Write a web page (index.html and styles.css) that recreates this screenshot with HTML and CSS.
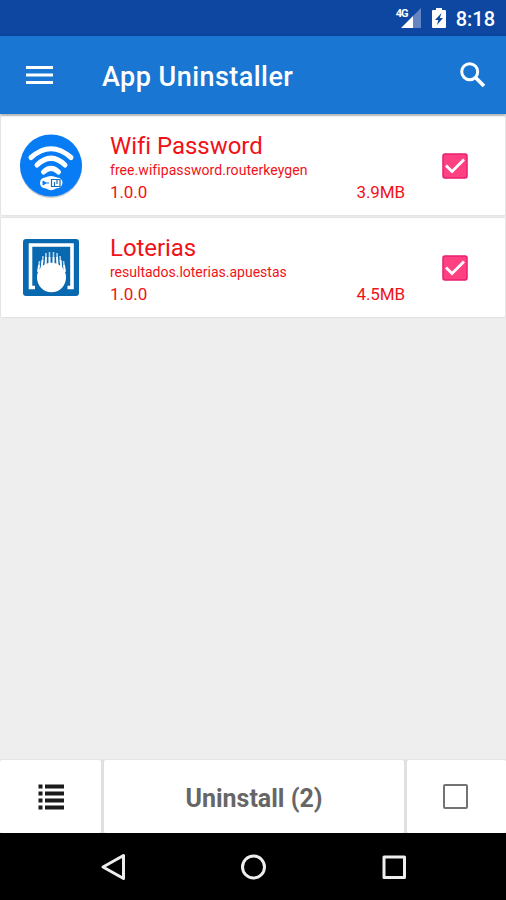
FILE: index.html
```html
<!DOCTYPE html>
<html lang="en">
<head>
    <meta charset="UTF-8">
    <meta name="viewport" content="width=device-width, initial-scale=1.0">
    <title>App Uninstaller</title>
    <link rel="stylesheet" href="styles.css">
</head>
<body>
    <div class="status-bar">
        <span class="network">4G</span>
        <svg class="signal" width="20" height="20" viewBox="0 0 20 20">
            <path d="M20 0V20H12V8Z" fill="#6385c3"/>
            <path d="M12 8V20H0Z" fill="#fff"/>
        </svg>
        <svg class="battery" width="14" height="20" viewBox="0 0 14 20">
            <path d="M1 2H4V0H10V2H13Q14 2 14 3V19Q14 20 13 20H1Q0 20 0 19V3Q0 2 1 2Z" fill="#fff"/>
            <path d="M9.500 5L3 12H6.300L5 17L11 10H7.800Z" fill="#0d47a1"/>
        </svg>
        <span class="clock">8:18</span>
    </div>

    <div class="toolbar">
        <svg class="menu" width="27" height="19" viewBox="0 0 27 19">
            <path d="M0 1.500H27M0 9H27M0 16.500H27" stroke="#fff" stroke-width="3"/>
        </svg>
        <h1>App Uninstaller</h1>
        <svg class="search" width="26" height="26" viewBox="0 0 26 26" fill="none" stroke="#fff">
            <circle cx="9.700" cy="9.700" r="8" stroke-width="3"/>
            <path d="M15.500 15.500L24 24" stroke-width="3.800"/>
        </svg>
    </div>

    <div class="app-list">
        <div class="app">
            <div class="app-icon">
                <svg width="64" height="66" viewBox="0 0 64 66">
                    <circle cx="32" cy="34" r="31" fill="#c9ccd0"/>
                    <circle cx="32" cy="32.500" r="31" fill="#087cf5"/>
                    <g fill="none" stroke="#fff" stroke-width="5" stroke-linecap="round">
                        <path d="M12 24.500Q32 7 52 24.500"/>
                        <path d="M18 32Q32 18.500 46 32"/>
                        <path d="M24.500 39Q32 31.500 39.500 39"/>
                    </g>
                    <path d="M26 44.500Q32 41.500 38 44.500Q43.500 45 43.500 50Q43 55 37 55.500Q32 59 27 55.500Q21 55 21 50Q21 45 26 44.500Z" fill="#fff"/>
                    <path d="M24 48V52L27 50ZM26.500 50H30" fill="#087cf5" stroke="#087cf5"/>
                    <path d="M32.500 46.500H41V53.500H32.500ZM35.500 49V53M38 47V51" fill="none" stroke="#176eb8" stroke-width="1.200"/>
                </svg>
            </div>
            <div class="info">
                <div class="name">Wifi Password</div>
                <div class="package wifi">free.wifipassword.routerkeygen</div>
                <div class="details"><span>1.0.0</span><span>3.9MB</span></div>
            </div>
            <svg class="check" width="26" height="26" viewBox="0 0 26 26">
                <rect x="1" y="1" width="24" height="24" rx="2" fill="#ff4081" stroke="#e91e72" stroke-width="1.500"/>
                <path d="M4 12.500L10 18.500L22 6.500" fill="none" stroke="#fff" stroke-width="2.800"/>
            </svg>
        </div>
        <div class="app">
            <div class="app-icon">
                <svg width="56" height="57" viewBox="0 0 56 57">
                    <rect width="56" height="57" rx="3" fill="#0868b0"/>
                    <path d="M12 48.500H7.500V6H49V48.500H44.500" fill="none" stroke="#fff" stroke-width="3.600"/>
                    <path d="M15.500 32L16.500 22M19 28L20 17M22.500 26L23 14M26.500 25V13M30.500 25V13M34.500 26L34 14M38 28L37 17M41.500 32L40.500 22" stroke="#b4d3e9" stroke-width="1.600"/>
                    <path d="M15 33L16 26M18.500 29L19.500 21M22.500 27L23 18M26.500 26V18M30.500 26V18M34.500 27L34 18M38.500 29L37.500 21M42 33L41 26" stroke="#fff" stroke-width="1.800"/>
                    <ellipse cx="28.500" cy="38.500" rx="14.500" ry="14.800" fill="#fff"/>
                </svg>
            </div>
            <div class="info">
                <div class="name">Loterias</div>
                <div class="package">resultados.loterias.apuestas</div>
                <div class="details"><span>1.0.0</span><span>4.5MB</span></div>
            </div>
            <svg class="check" width="26" height="26" viewBox="0 0 26 26">
                <rect x="1" y="1" width="24" height="24" rx="2" fill="#ff4081" stroke="#e91e72" stroke-width="1.500"/>
                <path d="M4 12.500L10 18.500L22 6.500" fill="none" stroke="#fff" stroke-width="2.800"/>
            </svg>
        </div>
    </div>

    <div class="bottom-bar">
        <div class="action">
            <svg width="26" height="26" viewBox="0 0 26 26" stroke="#1b1b1b" stroke-width="4">
                <path d="M0.500 2.500H4.500M7 2.500H26M0.500 9.500H4.500M7 9.500H26M0.500 16.500H4.500M7 16.500H26M0.500 23.500H4.500M7 23.500H26"/>
            </svg>
        </div>
        <div class="action uninstall">Uninstall (2)</div>
        <div class="action last"><span class="select-all"></span></div>
    </div>

    <div class="nav-bar">
        <svg width="506" height="66" viewBox="0 0 506 66" fill="none" stroke="#eee" stroke-width="3" stroke-linejoin="round">
            <path d="M123.500 21.500V44.500L103 33Z"/>
            <circle cx="253.500" cy="33" r="11"/>
            <rect x="384" y="23" width="20.500" height="20.500"/>
        </svg>
    </div>
</body>
</html>
```
FILE: styles.css
```css
* { box-sizing: border-box; }
body {
    font-family: Roboto, sans-serif;
    margin: 0;
    height: 900px;
    display: flex;
    flex-direction: column;
    background: #eee;
    overflow: hidden;
}
svg { display: block; flex: none; }
.status-bar {
    height: 36px;
    flex: none;
    display: flex;
    justify-content: flex-end;
    padding-right: 11px;
    background: #0d47a1;
    color: white;
}
.network { font-size: 11px; font-weight: 700; line-height: 14px; margin-top: 7px; margin-right: -7px; letter-spacing: -1px; }
.signal { margin-top: 8px; }
.battery { margin: 8px 10px 0 11px; }
.clock { font-size: 20px; font-weight: 500; line-height: 38px; }
.toolbar {
    height: 78px;
    flex: none;
    display: flex;
    align-items: center;
    padding: 0 20px 0 26px;
    background: #1976d2;
    color: white;
    box-shadow: 0 1px 3px rgba(0, 0, 0, 0.35);
    z-index: 1;
}
.toolbar h1 { margin: 3px 0 0 49px; font-size: 27px; font-weight: 500; letter-spacing: 0.45px; flex: 1; white-space: nowrap; }
.app-list { flex: 1; padding: 2px 1px 0; }
.app {
    height: 99px;
    margin-bottom: 3px;
    display: flex;
    background: white;
    border-radius: 1px;
    box-shadow: 0 0 2px rgba(0, 0, 0, 0.15);
}
.app-icon { width: 100px; height: 99px; display: flex; align-items: center; justify-content: center; }
.info { width: 295px; margin-left: 9px; color: #f01218; white-space: nowrap; }
.name { font-size: 24px; letter-spacing: -0.05px; line-height: 28px; padding-top: 16px; }
.package { font-size: 14px; line-height: 18px; margin-top: 1px; }
.wifi { letter-spacing: 0.06px; }
.details { display: flex; justify-content: space-between; font-size: 17px; letter-spacing: -0.1px; line-height: 20px; margin-top: 3px; }
.check { margin: 37px 0 0 37px; }
.bottom-bar { height: 74px; flex: none; display: grid; grid-template-columns: 101px 300px 99px; column-gap: 3px; background: #e0e0e0; border-top: 1px solid #e4e4e4; }
.action { background: white; display: flex; align-items: center; justify-content: center; border-radius: 2px; }
.uninstall { font-size: 25px; font-weight: 700; color: #666; padding-top: 3px; }
.last { padding-right: 2px; }
.select-all { width: 25px; height: 25px; border: 2px solid #737373; border-radius: 2px; }
.nav-bar { height: 67px; flex: none; background: black; padding-top: 1px; }
```
